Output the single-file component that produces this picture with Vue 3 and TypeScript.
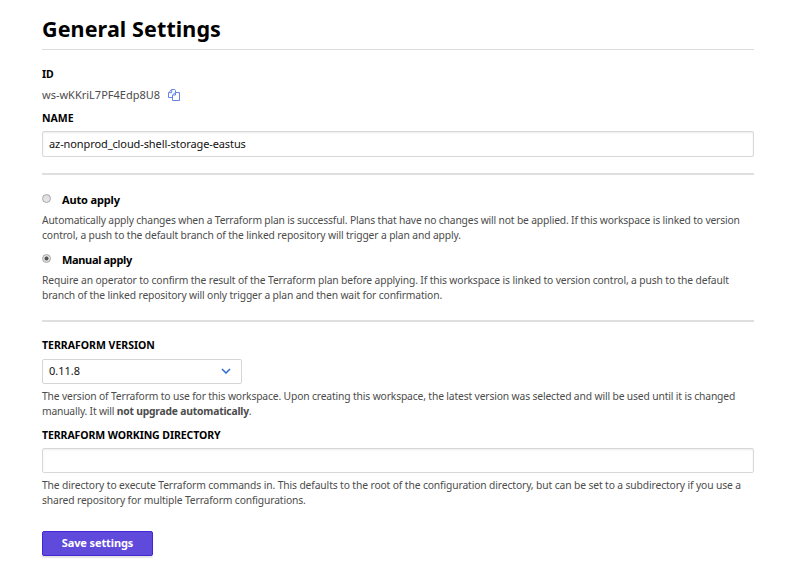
<script setup lang="ts">
import { ref } from 'vue'

interface ApplyOption {
  value: string
  label: string
  lines: { text: string; cls: string }[]
}

const workspaceId = 'ws-wKKriL7PF4Edp8U8'
const name = ref('az-nonprod_cloud-shell-storage-eastus')
const directory = ref('')
const method = ref('manual')
const version = ref('0.11.8')

const options: ApplyOption[] = [
  {
    value: 'auto',
    label: 'Auto apply',
    lines: [
      { text: 'Automatically apply changes when a Terraform plan is successful. Plans that have no changes will not be applied. If this workspace is linked to version', cls: 'a1' },
      { text: 'control, a push to the default branch of the linked repository will trigger a plan and apply.', cls: 'a2' },
    ],
  },
  {
    value: 'manual',
    label: 'Manual apply',
    lines: [
      { text: 'Require an operator to confirm the result of the Terraform plan before applying. If this workspace is linked to version control, a push to the default', cls: 'm1' },
      { text: 'branch of the linked repository will only trigger a plan and then wait for confirmation.', cls: 'm2' },
    ],
  },
]
</script>

<template>
  <main class="settings">
    <h1>General Settings</h1>

    <div class="label id-label">ID</div>
    <div class="id-row">
      <span class="id-value">{{ workspaceId }}</span>
      <svg class="copy" viewBox="0 0 12 12" width="12" height="12" aria-hidden="true">
        <path d="M4.5 8.5h-4V4l3-3.5h3.2l.8 1v1.5M3.7.7v3H.7M4.5 6l2.8-2.5h4.2v8h-7zM7.5 3.7V6H4.7" />
      </svg>
    </div>

    <label class="label name-label" for="name">NAME</label>
    <input id="name" v-model="name" class="field name-field" type="text" spellcheck="false" />

    <hr />

    <div class="options">
      <section v-for="o in options" :key="o.value">
        <label class="option">
          <input v-model="method" type="radio" name="method" :value="o.value" />
          <span :class="'title-' + o.value">{{ o.label }}</span>
        </label>
        <p class="help">
          <span v-for="l in o.lines" :key="l.cls" class="line" :class="l.cls">{{ l.text }}</span>
        </p>
      </section>
    </div>

    <hr class="second" />

    <div class="label version-label">TERRAFORM VERSION</div>
    <button class="select" type="button">
      <span>{{ version }}</span>
      <svg viewBox="0 0 10 6" width="10" height="6" aria-hidden="true"><path d="M1 1l4 4 4-4" /></svg>
    </button>
    <p class="help">
      <span class="line v1">The version of Terraform to use for this workspace. Upon creating this workspace, the latest version was selected and will be used until it is changed</span>
      <span class="line v2">manually. It will <strong>not upgrade automatically</strong>.</span>
    </p>

    <label class="label directory-label" for="directory">TERRAFORM WORKING DIRECTORY</label>
    <input id="directory" v-model="directory" class="field" type="text" />
    <p class="help">
      <span class="line d1">The directory to execute Terraform commands in. This defaults to the root of the configuration directory, but can be set to a subdirectory if you use a</span>
      <span class="line d2">shared repository for multiple Terraform configurations.</span>
    </p>

    <button class="save" type="button">Save settings</button>
  </main>
</template>

<style>
body {
  background: #fff;
}
</style>

<style scoped>
.settings {
  box-sizing: border-box;
  width: 791px;
  height: 573px;
  padding: 10px 37px 0 42px;
  overflow: hidden;
  font-family: "Noto Sans", "Open Sans", sans-serif;
  font-size: 10.3px;
  color: #4c4c4c;
}
.settings * {
  box-sizing: border-box;
}
h1 {
  height: 40px;
  margin: 0;
  border-bottom: 1px solid #dcdcdc;
  font-size: 21.5px;
  line-height: 38px;
  font-weight: 700;
  letter-spacing: 0.1px;
  color: #000;
}
.label {
  display: block;
  height: 15px;
  line-height: 15px;
  font-size: 10.5px;
  font-weight: 700;
  color: #000;
  white-space: nowrap;
}
.id-label {
  margin-top: 17px;
}
.id-row {
  display: flex;
  align-items: center;
  gap: 8px;
  height: 16px;
  margin-top: 4px;
  font-size: 11px;
}
.copy {
  margin-top: 2px;
  fill: none;
  stroke: #6583e6;
  stroke-width: 1;
}
.name-label {
  margin-top: 9px;
}
.field {
  display: block;
  width: 100%;
  height: 25px;
  padding: 0 6px;
  border: 1px solid #d8d8d8;
  border-radius: 2px;
  box-shadow: inset 0 1px 2px rgba(0, 0, 0, 0.08);
  background: #fff;
  outline: 0;
  font: 11px "Noto Sans", sans-serif;
  color: #111;
}
.name-field {
  height: 26px;
  margin-top: 5px;
  padding-bottom: 2px;
  letter-spacing: -0.1px;
}
hr {
  height: 2px;
  margin: 16px 0 0;
  border: 0;
  background: #dfdfdf;
}
.options {
  display: flex;
  flex-direction: column;
  gap: 8px;
  padding-top: 16px;
}
.option {
  display: flex;
  align-items: center;
  gap: 11px;
  height: 16px;
  font-size: 11px;
  font-weight: 700;
  color: #000;
}
.title-auto {
  letter-spacing: -0.15px;
}
.title-manual {
  letter-spacing: -0.34px;
}
.option input {
  appearance: none;
  flex: none;
  width: 9px;
  height: 9px;
  margin: 0 0 2px;
  border: 1px solid #a5a5a5;
  border-radius: 50%;
  background: linear-gradient(#ddd, #e8e8e8);
}
.option input:checked {
  background: radial-gradient(circle, #555 0 1.6px, #e3e3e3 2.4px);
}
.help {
  height: 30px;
  margin: 5px 0 0;
  line-height: 15px;
}
.options .help {
  margin-top: 6px;
}
.line {
  display: block;
  width: max-content;
  white-space: nowrap;
}
.a1 { letter-spacing: -0.166px; }
.a2 { letter-spacing: -0.135px; }
.m1 { letter-spacing: -0.135px; }
.m2 { letter-spacing: -0.144px; }
.v1 { letter-spacing: -0.145px; }
.v2 { letter-spacing: -0.19px; }
.d1 { letter-spacing: -0.121px; }
.d2 { letter-spacing: -0.138px; }
.second {
  margin-top: 17px;
}
.version-label {
  margin-top: 16px;
}
.select {
  display: flex;
  align-items: center;
  justify-content: space-between;
  width: 200px;
  height: 25px;
  margin-top: 6px;
  padding: 0 10px 1px 6px;
  border: 1px solid #d5d5d5;
  border-radius: 2px;
  background: #fff;
  font: 11px "Noto Sans", sans-serif;
  color: #111;
}
.select span {
  margin-bottom: 1px;
}
.select svg {
  fill: none;
  stroke: #2c69d4;
  stroke-width: 1.5;
}
.directory-label {
  margin: 9px 0 5px;
  letter-spacing: -0.08px;
}
.save {
  display: flex;
  align-items: center;
  justify-content: center;
  width: 111px;
  height: 25px;
  margin-top: 23px;
  padding: 0 0 2px;
  border: 1px solid #4026d6;
  border-radius: 2px;
  box-shadow: 0 2px 1px rgba(0, 0, 0, 0.1);
  background: #5f4adb;
  font: 700 11px "Noto Sans", sans-serif;
  letter-spacing: -0.1px;
  color: #fff;
}
</style>
